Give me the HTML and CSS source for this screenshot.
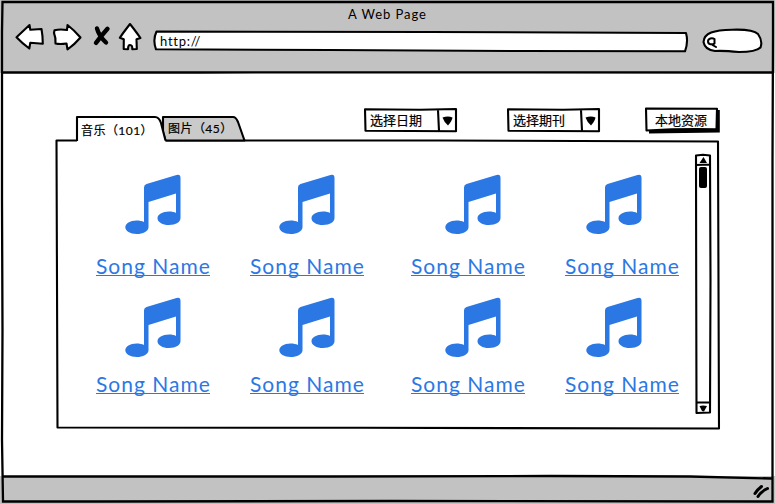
FILE: index.html
```html
<!DOCTYPE html>
<html lang="zh">
<head>
<meta charset="utf-8">
<title>A Web Page</title>
<link rel="stylesheet" href="styles.css">
</head>
<body>
<svg class="defs" width="0" height="0" aria-hidden="true">
  <symbol id="note" viewBox="0 0 56 61">
    <path d="M19 13.5Q19 10.7 21.500 10L51.500 1.100Q55.500 0 55.500 4V44C55.500 48 51 51 44 51C37.500 51 32.500 48 32.500 44.200C32.500 40.500 37.500 37.500 44 37.500C47 37.500 49.500 38 51 39V19.500L23.500 28V53.500C23 57.500 18 60 11.800 60C5 60 .3 57 .3 53.300C.3 49.600 5 46.500 11.500 46.500C14.500 46.500 17 47 19 48Z"/>
  </symbol>
</svg>
<div class="window">
  <header class="header">
    <div class="title">A Web Page</div>
    <nav class="toolbar">
      <svg class="back" viewBox="15 22 30 32"><path class="shape" d="M16.500 37.200L29.500 25L30.300 29.800L41.500 29Q42.800 36 42.800 43.700L30.300 42.800L29.300 48.500Q22 43 16.500 37.200Z"/></svg>
      <svg class="forward" viewBox="52 22 30 32"><path class="shape" d="M54.500 30.200Q60 29 67 30L67.500 25Q74 30 80.500 37.500Q75 44 67.500 49.500L66.500 43.500Q60 44.500 55.500 43.500Q56 38 54 33Z"/></svg>
      <svg class="stop" viewBox="92 22 20 32"><path d="M97 28.500Q99 36 106 42.500M107.500 28.800Q102 35 96 42.800"/></svg>
      <svg class="home" viewBox="118 22 26 32"><path class="shape" d="M130 24Q134 29 140.500 38L136.500 39.200L136.800 49L132.300 49.300Q132.500 45 130 45Q128 45 128 49.200L123.700 49L123.800 39.200L119.800 37.800Q123 33 130 24Z"/></svg>
      <div class="address"><svg class="outline" viewBox="153 27 536 28"><path class="shape" d="M156.500 31.500L430 32L686 33Q688.500 42 685 51.300L520 51L330 50L156 49.300Q152.500 40 156.500 31.500Z"/></svg><span>http://</span></div>
      <svg class="search" viewBox="701 26 64 30"><path class="shape" d="M703.500 42C704 33 714 30 732 29.700Q753 29 758 34Q763 41 760.500 47.500Q756 52 739 52Q724 50.500 715 51Q705 50 703.500 42Z"/><path class="lens" d="M714.500 39C712 37.300 708 38.500 708 41.500C708 44.500 712 45 714.500 43.500V39M714.500 43.500L712.500 45L716 47"/></svg>
    </nav>
  </header>
  <main class="page">
    <div class="controls">
      <div class="tabs">
        <div class="tab active"><svg class="outline" viewBox="75 115 91 28"><path fill="#fff" d="M77 142V117L157 117Q160 118 161 123L165.500 142Z"/><path class="line" d="M77 141V117L155 117Q159 117 161 123L165.500 140.500"/></svg><span>音乐（101）</span></div>
        <div class="tab"><svg class="outline" viewBox="162 115 84 28"><path class="line" fill="#cacaca" d="M165.500 140.500L163 132V117L233 117Q236 117 238 122L244.500 140.500Z"/></svg><span>图片（45）</span></div>
      </div>
      <div class="combo date"><svg class="outline" viewBox="363 107 95 26"><path class="shape" d="M365 109.300L420 109.700L456 109V131.200L365.500 130.800Z M438 110L439 131"/><path d="M442.500 117.500Q448 115.500 452.500 117.500Q452 121 448 125.500Q444 122 442.500 117.500Z"/></svg><span>选择日期</span></div>
      <div class="combo journal"><svg class="outline" viewBox="506 107 95 26"><path class="shape" d="M508 109.300L563 109.700L599 109L599 131.200L508.500 130.800Z M581 110L582 131"/><path d="M585.500 117.500Q591 115.500 595.500 117.500Q595 121 591 125.500Q587 122 585.500 117.500Z"/></svg><span>选择期刊</span></div>
      <button class="local"><svg class="outline" viewBox="644 106 77 28"><path d="M649 110H719.800V132.500L649 133.500Z"/><path class="shape" d="M646 108.500L717 108.800L716.500 129.300Q682 128.500 646.500 130.500Z"/></svg><span>本地资源</span></button>
    </div>
    <section class="panel">
      <svg class="outline" viewBox="55 139 666 291"><path class="line" d="M78 140.500H56.500L57.500 427.500L360 427.800L719 428.500L718 141.500L440 140.500L165 140.500"/></svg>
      <div class="songs">
        <div class="song"><svg><use href="#note"/></svg><a>Song Name</a></div>
        <div class="song"><svg><use href="#note"/></svg><a>Song Name</a></div>
        <div class="song third"><svg><use href="#note"/></svg><a>Song Name</a></div>
        <div class="song fourth"><svg><use href="#note"/></svg><a>Song Name</a></div>
        <div class="song lower"><svg><use href="#note"/></svg><a>Song Name</a></div>
        <div class="song lower"><svg><use href="#note"/></svg><a>Song Name</a></div>
        <div class="song lower third"><svg><use href="#note"/></svg><a>Song Name</a></div>
        <div class="song lower fourth"><svg><use href="#note"/></svg><a>Song Name</a></div>
      </div>
      <svg class="scrollbar" viewBox="694 153 18 262"><path class="line" d="M696 155.500L703 154.800L710 155.500L710.500 280L710 412.500L696.500 413L696.200 280ZM696 165L710 164.500M696 402.500H710"/><path d="M699.500 163L703.500 157L707 163ZM699.500 406Q703 405 707 406L704 411.500L702 411Z"/><rect x="699" y="167" width="8" height="21" rx="2"/></svg>
    </section>
  </main>
  <footer class="footer"><svg viewBox="751 482 20 18"><path d="M755 493.500Q757 490 761.500 486.500M758 496.500Q761 491.500 767.500 488.500"/></svg></footer>
  <svg class="frame" viewBox="0 0 775 504"><path d="M2.500 2H773V34L772.500 160V501.500L390 501L100 501.500H3L2 440L2.500 330L2 200V32ZM2 72.500H200L520 72.300L773 72.500M3 476.500H330L550 476L690 476.500L772 478.500"/></svg>
</div>
</body>
</html>
```
FILE: styles.css
```css
* { box-sizing: border-box; }
body { margin: 0; background: #fff; color: #000; font: 13px Lato, "Noto Sans CJK SC", sans-serif; }
svg { display: block; flex: none; overflow: visible; }
.defs { position: absolute; }
.window { position: relative; width: 775px; height: 504px; overflow: hidden; display: flex; flex-direction: column; }
.frame { position: absolute; inset: 0; width: 775px; height: 504px; pointer-events: none; }
.frame path { fill: none; stroke: #000; stroke-width: 2.3; }
.shape { fill: #fff; stroke: #000; stroke-width: 2.1; stroke-linejoin: round; }
.line { stroke: #000; stroke-width: 2.1; stroke-linejoin: round; }
.line:not([fill]) { fill: none; }
.outline { position: absolute; inset: 0; width: 100%; height: 100%; }

.header { height: 73px; background: #c2c2c2; padding-top: 4px; }
.title { height: 18px; line-height: 20px; text-align: center; letter-spacing: .95px; }
.toolbar { display: flex; align-items: center; height: 32px; padding-left: 15px; }
.back, .forward { width: 30px; height: 32px; }
.back { margin-right: 7px; }
.forward { margin-right: 10px; }
.stop { width: 20px; height: 32px; margin-right: 6px; fill: none; stroke: #000; stroke-width: 4.4; stroke-linecap: round; }
.home { width: 26px; height: 32px; margin-right: 9px; }
.address { position: relative; width: 536px; height: 28px; margin: 6px 12px 0 0; padding-left: 7px; line-height: 29px; letter-spacing: .75px; }
.address span, .tab span, .combo span, .local span { position: relative; }
.search { width: 64px; height: 30px; margin-top: 6px; }
.lens { fill: none; stroke: #000; stroke-width: 2; stroke-linecap: round; stroke-linejoin: round; }

.page { height: 403px; padding: 33px 54px 0 55px; }
.controls { display: flex; height: 33px; position: relative; z-index: 1; -webkit-text-stroke: .2px #000; }
.tabs { display: flex; width: 171px; margin: 9px 117px 0 20px; height: 28px; }
.tab { position: relative; width: 87px; height: 28px; padding-left: 6px; line-height: 32px; font-size: 12px; letter-spacing: .45px; white-space: nowrap; }
.tab + .tab { width: 84px; line-height: 28px; }
.tab.active { z-index: 1; width: 91px; margin-right: -4px; }
.combo { position: relative; width: 95px; height: 26px; margin-top: 1px; padding-left: 7px; line-height: 26px; }
.date { margin-right: 48px; }
.journal { margin-right: 43px; }
.local { position: relative; width: 77px; height: 28px; padding: 1px 3px 1px 0; border: 0; background: none; color: #000; font: inherit; line-height: 26px; white-space: nowrap; }

.panel { position: relative; display: flex; width: 666px; height: 291px; }
.songs { display: grid; grid-template-columns: 154px 161px 154px 114px; grid-template-rows: 123px 123px; padding: 35px 0 0 41px; width: 639px; }
.song { width: 114px; height: 110px; display: flex; flex-direction: column; align-items: center; color: #2b78e4; }
.song svg { width: 56px; height: 61px; fill: #2b78e4; margin-bottom: 18px; }
.third svg { margin-left: 9px; }
.fourth svg { margin-right: 17px; }
.lower svg { margin-bottom: 13px; }
.song a { width: 114px; height: 23px; border-bottom: 1px solid #2b78e4; font-size: 21px; line-height: 26px; letter-spacing: 1px; white-space: nowrap; }
.scrollbar { width: 18px; height: 262px; margin-top: 14px; }

.footer { height: 28px; background: #c2c2c2; padding: 6px 0 0 751px; }
.footer svg { width: 20px; height: 18px; fill: none; stroke: #000; stroke-width: 3; stroke-linecap: round; }
```
